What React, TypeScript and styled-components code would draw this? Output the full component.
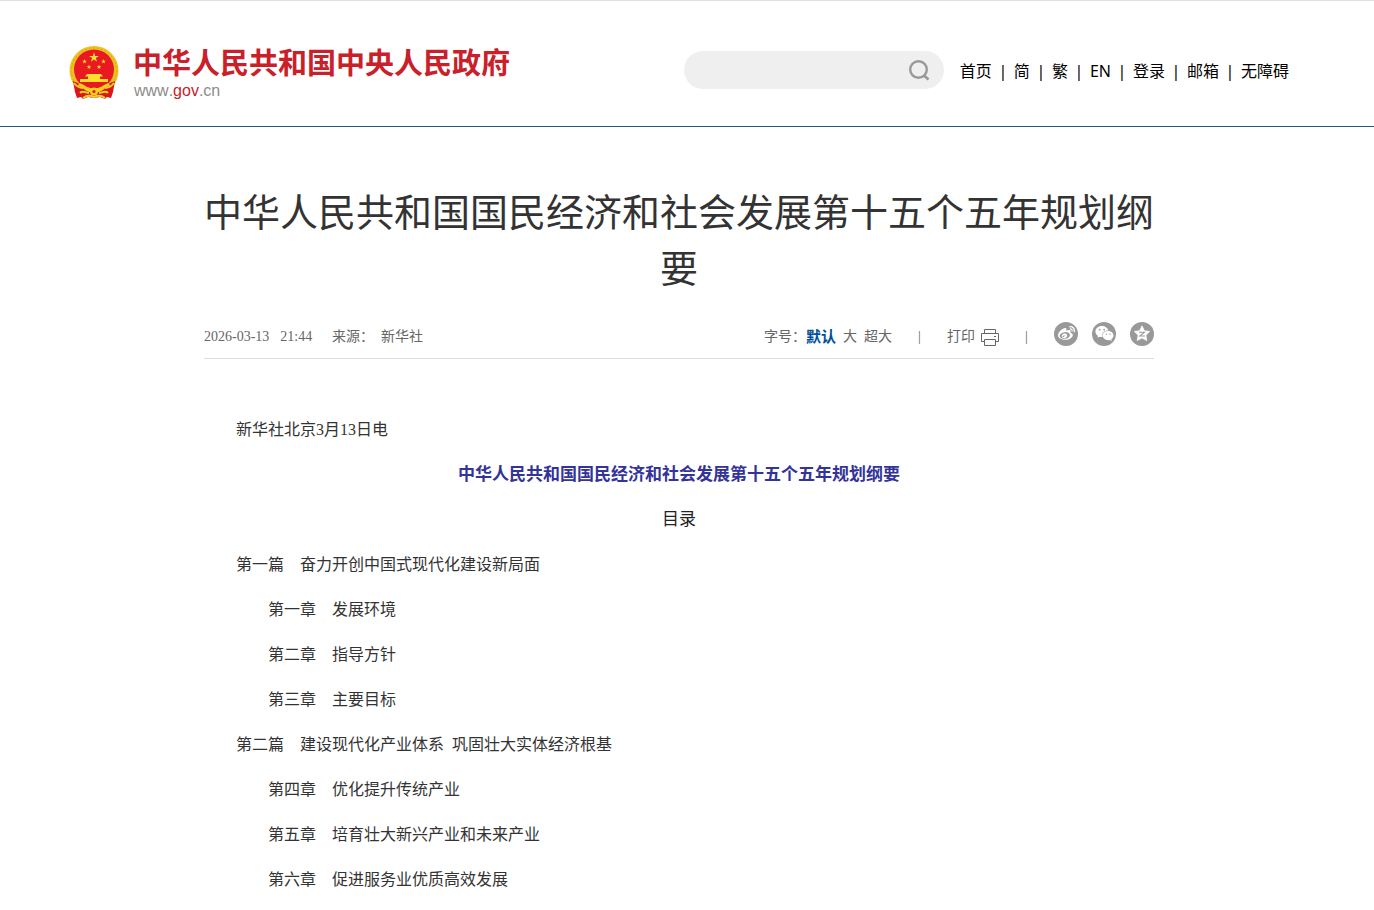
import React from "react";
import styled, { createGlobalStyle } from "styled-components";
import { FaWeibo, FaWeixin } from "react-icons/fa";

const SONG = `"Liberation Serif", "Noto Sans CJK SC", serif`;
const HEI = `"Noto Sans", "Noto Sans CJK SC", sans-serif`;

const GlobalStyle = createGlobalStyle`
  * { box-sizing: border-box; }
  body { margin: 0; background: #fff; color: #333; font-family: ${HEI}; }
  a { color: inherit; text-decoration: none; }
  h1, h2, p { margin: 0; }
`;

const Header = styled.header`
  border-top: 1px solid #e0e0e0;
  border-bottom: 1px solid #245488;
  padding: 44px 16px 25px 0;
`;

const HeaderInner = styled.div`
  max-width: 1220px;
  margin: 0 auto;
  display: flex;
  justify-content: space-between;
  align-items: flex-start;
`;

const Brand = styled.a`
  display: flex;
  gap: 14px;
`;

const BrandText = styled.span`
  display: flex;
  flex-direction: column;
`;

const BrandName = styled.span`
  font: bold 29px/36px ${HEI};
  color: #c9202a;
  white-space: nowrap;
`;

const BrandUrl = styled.span`
  font: 16px/20px "Liberation Sans", Arial, sans-serif;
  font-kerning: none;
  padding-left: 1px;
  color: #8c8c8c;
  b { font-weight: normal; color: #c9202a; }
`;

const Tools = styled.div`
  display: flex;
  align-items: center;
  gap: 16px;
  padding-top: 6px;
`;

const SearchForm = styled.form`
  display: flex;
  align-items: center;
  width: 260px;
  height: 38px;
  padding: 0 14px 0 16px;
  border-radius: 19px;
  background: #efefef;
`;

const SearchInput = styled.input`
  flex: 1;
  min-width: 0;
  border: 0;
  outline: 0;
  background: transparent;
  font: 14px/20px ${HEI};
`;

const SearchButton = styled.button`
  display: flex;
  padding: 0;
  border: 0;
  background: none;
`;

const Nav = styled.nav`
  display: flex;
  padding-top: 2px;
  font-size: 16px;
  line-height: 24px;
  color: #000;
  white-space: nowrap;
`;

const NavDivider = styled.span`
  width: 22px;
  text-align: center;
`;

const Main = styled.main`
  padding: 56px 16px 0 0;
`;

const Article = styled.article`
  max-width: 950px;
  margin: 0 auto;
`;

const Title = styled.h1`
  font: normal 38px/56px ${HEI};
  text-align: center;
`;

const Meta = styled.div`
  display: flex;
  justify-content: space-between;
  align-items: center;
  height: 64px;
  padding-top: 20px;
  border-bottom: 1px solid #dcdcdc;
  font: 14px/20px ${SONG};
  color: #666;
`;

const MetaGroup = styled.div<{ $gap: number }>`
  display: flex;
  align-items: center;
  gap: ${(p) => p.$gap}px;
`;

const MetaDivider = styled.span`
  width: 7px;
  text-align: center;
`;

const Stamp = styled.time`
  display: flex;
  gap: 11px;
  min-width: 112px;
`;

const TextButton = styled.button<{ $active?: boolean }>`
  display: flex;
  align-items: center;
  gap: 6px;
  padding: 0;
  border: 0;
  background: none;
  font: ${(p) => (p.$active ? "bold 15px" : "14px")}/20px ${SONG};
  color: ${(p) => (p.$active ? "#004f98" : "inherit")};
`;

const ShareButton = styled.button`
  display: flex;
  align-items: center;
  justify-content: center;
  width: 24px;
  height: 24px;
  margin-bottom: 6px;
  padding: 0;
  border: 0;
  border-radius: 50%;
  background: #999;
  color: #fff;
`;

const Body = styled.div`
  display: flex;
  flex-direction: column;
  gap: 15px;
  padding: 56px 0 16px;
  font: 16px/30px ${SONG};
`;

const Line = styled.p<{ $level?: number }>`
  padding-left: ${(p) => (p.$level ?? 1) * 32}px;
  white-space: pre-wrap;
`;

const Heading = styled.h2<{ $main?: boolean }>`
  font: ${(p) => (p.$main ? "bold" : "normal")} 17px/30px ${SONG};
  color: ${(p) => (p.$main ? "#333399" : "#222")};
  text-align: center;
`;

const STAR = "M0-1 .225-.309 .951-.309 .363.118 .588.809 0 .382-.588.809-.363.118-.951-.309-.225-.309Z";
const WIDE_STAR = "M0-1 .294-.405 .951-.309 .476.155 .588.809 0 .5-.588.809-.476.155-.951-.309-.294-.405Z";

const Emblem = () => (
  <svg width="50" height="56" viewBox="0 0 50 56" aria-hidden="true">
    <circle cx="25" cy="25.500" r="24.500" fill="#efc21f" />
    <circle cx="25" cy="25.500" r="22.500" fill="none" stroke="#dba51a" strokeWidth="1" strokeDasharray="2 2" />
    <circle cx="25" cy="24.500" r="20" fill="#e81920" />
    <g fill="#ffdf2e">
      <path d={STAR} transform="translate(25 12.500) scale(5.200)" />
      <path d={STAR} transform="translate(15.500 16.500) scale(2.500)" />
      <path d={STAR} transform="translate(34.500 16.500) scale(2.500)" />
      <path d={STAR} transform="translate(20 22) scale(2.500)" />
      <path d={STAR} transform="translate(30 22) scale(2.500)" />
      <path d="M18 29h14l2 2.500H31V34h8v3H11v-3h8v-2.500h-3Z" />
    </g>
    <path d="M4 36c5 2 9 4 13 6h16c4-2 8-4 13-6l-2 11-2 6-4-1-2 2-5-2-6 1-6-1-5 2-2-2-4 1-2-6Z" fill="#d8171d" />
    <path d="M10 38c5 1 8 5 12 5h6c4 0 7-4 12-5l1 3c-5 1-7 5-11 6H20c-4-1-6-5-11-6Z" fill="#f5ce22" />
    <path d="M5 38c3 4 6 5 9 5M45 38c-3 4-6 5-9 5M11 48c3-3 6 0 9 0M39 48c-3-3-6 0-9 0M14 53c4-3 7-3 11-1 4-2 7-2 11 1" fill="none" stroke="#f5ce22" strokeWidth="2" />
    <circle cx="25" cy="46.500" r="4" fill="#f5ce22" />
    <circle cx="25" cy="46.500" r="1.500" fill="#d8171d" />
  </svg>
);

const SearchIcon = () => (
  <svg width="22" height="22" viewBox="0 0 22 22" fill="none" stroke="#999" aria-hidden="true">
    <circle cx="10.500" cy="10.500" r="8.300" strokeWidth="2.400" />
    <path d="m16 16.500 4.500 4" strokeWidth="2.600" />
  </svg>
);

const PrintIcon = () => (
  <svg width="18" height="18" viewBox="0 0 18 18" fill="none" stroke="#666" aria-hidden="true">
    <path d="M3.500 5.500v-4h11v4M3.500 13.500h-3v-8h17v8h-3M3.500 11.500h11v6h-11ZM13 8.500h2" />
  </svg>
);

const QzoneIcon = () => (
  <svg width="18" height="18" viewBox="-1.100 -1.100 2.200 2.200" aria-hidden="true">
    <path d={WIDE_STAR} fill="#fff" stroke="#fff" strokeWidth=".08" strokeLinejoin="round" />
    <path d="M-.36-.22H.3L-.26.24H.36" fill="none" stroke="#999" strokeWidth=".13" />
  </svg>
);

const NAV = ["首页", "简", "繁", "EN", "登录", "邮箱", "无障碍"];

const CONTENTS: { level: number; text: string }[] = [
  { level: 1, text: "第一篇　奋力开创中国式现代化建设新局面" },
  { level: 2, text: "第一章　发展环境" },
  { level: 2, text: "第二章　指导方针" },
  { level: 2, text: "第三章　主要目标" },
  { level: 1, text: "第二篇　建设现代化产业体系  巩固壮大实体经济根基" },
  { level: 2, text: "第四章　优化提升传统产业" },
  { level: 2, text: "第五章　培育壮大新兴产业和未来产业" },
  { level: 2, text: "第六章　促进服务业优质高效发展" },
];

export default function App() {
  return (
    <>
      <GlobalStyle />
      <Header>
        <HeaderInner>
          <Brand href="#">
            <Emblem />
            <BrandText>
              <BrandName>中华人民共和国中央人民政府</BrandName>
              <BrandUrl>www.<b>gov</b>.cn</BrandUrl>
            </BrandText>
          </Brand>
          <Tools>
            <SearchForm role="search">
              <SearchInput type="text" aria-label="搜索" />
              <SearchButton type="button" aria-label="搜索"><SearchIcon /></SearchButton>
            </SearchForm>
            <Nav>
              {NAV.map((item, i) => (
                <React.Fragment key={item}>
                  {i > 0 && <NavDivider>|</NavDivider>}
                  <a href="#">{item}</a>
                </React.Fragment>
              ))}
            </Nav>
          </Tools>
        </HeaderInner>
      </Header>
      <Main>
        <Article>
          <Title>中华人民共和国国民经济和社会发展第十五个五年规划纲要</Title>
          <Meta>
            <MetaGroup $gap={16}>
              <Stamp dateTime="2026-03-13T21:44"><span>2026-03-13</span><span>21:44</span></Stamp>
              <MetaGroup $gap={7}><span>来源：</span><span>新华社</span></MetaGroup>
            </MetaGroup>
            <MetaGroup $gap={24}>
              <MetaGroup $gap={7}>
                <MetaGroup $gap={0}>
                  <span>字号：</span>
                  <TextButton $active>默认</TextButton>
                </MetaGroup>
                <TextButton>大</TextButton>
                <TextButton>超大</TextButton>
              </MetaGroup>
              <MetaDivider>|</MetaDivider>
              <TextButton>打印<PrintIcon /></TextButton>
              <MetaDivider>|</MetaDivider>
              <MetaGroup $gap={14}>
                <ShareButton aria-label="微博"><FaWeibo size={17} /></ShareButton>
                <ShareButton aria-label="微信"><FaWeixin size={19} /></ShareButton>
                <ShareButton aria-label="QQ空间"><QzoneIcon /></ShareButton>
              </MetaGroup>
            </MetaGroup>
          </Meta>
          <Body>
            <Line>新华社北京3月13日电</Line>
            <Heading $main>中华人民共和国国民经济和社会发展第十五个五年规划纲要</Heading>
            <Heading>目录</Heading>
            {CONTENTS.map((c) => (
              <Line key={c.text} $level={c.level}>{c.text}</Line>
            ))}
          </Body>
        </Article>
      </Main>
    </>
  );
}
